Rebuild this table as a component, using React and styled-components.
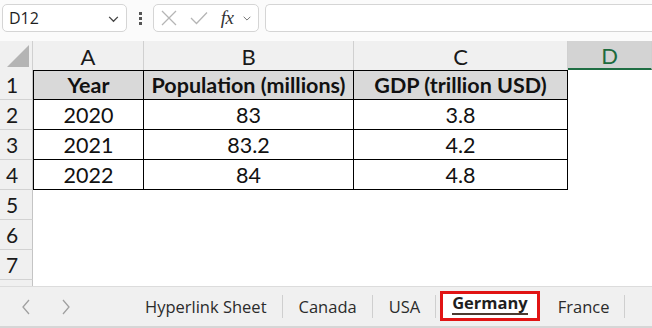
import React from 'react';
import styled, { createGlobalStyle } from 'styled-components';

const GlobalStyle = createGlobalStyle`
    html, body {
        margin: 0;
        padding: 0;
        background: #ffffff;
    }
    * {
        box-sizing: border-box;
    }
`;

const Window = styled.div`
    width: 652px;
    height: 328px;
    display: flex;
    flex-direction: column;
    overflow: hidden;
    background: #ffffff;
    font-family: Lato, "Liberation Sans", sans-serif;
    color: #1a1a1a;
`;

// ---- formula bar ----

const FormulaBar = styled.div`
    height: 41px;
    flex: none;
    display: flex;
    align-items: flex-start;
    padding: 4px 0 0 2px;
    background: #fbfbfb;
`;

const Box = styled.div`
    height: 28px;
    border: 1px solid #d5d5d5;
    border-radius: 5px;
    background: #ffffff;
    display: flex;
    align-items: center;
    width: ${props => props.width || 'auto'};
    ${props => props.grow && `flex: 1; border-right: none; border-radius: 5px 0 0 5px; margin-left: 6px;`}
`;

const NameText = styled.span`
    flex: 1;
    padding-left: 6px;
    font-family: "Open Sans", "Noto Sans", sans-serif;
    font-size: 16px;
    color: #1f1f1f;
`;

const Dots = styled.div`
    width: 26px;
    display: flex;
    flex-direction: column;
    align-items: center;
    gap: 2px;
    padding-top: 8px;
    span {
        width: 3px;
        height: 3px;
        background: #555;
    }
`;

const IconSlot = styled.div`
    display: flex;
    align-items: center;
    justify-content: center;
    width: ${props => props.w}px;
    height: 100%;
`;

const Fx = styled.span`
    font-family: "Liberation Serif", serif;
    font-style: italic;
    font-size: 19px;
    color: #333;
    letter-spacing: -0.5px;
`;

// ---- grid ----

const Sheet = styled.div`
    flex: 1;
    display: grid;
    grid-template-columns: 33px 111px 210px 214px 1fr;
    grid-template-rows: 29px;
    grid-auto-rows: 30px;
    overflow: hidden;
    align-content: start;
`;

const Corner = styled.div`
    background: #f0f0f0;
    border-right: 1px solid #d0d0d0;
    position: relative;
    &::after {
        content: '';
        position: absolute;
        right: 3px;
        bottom: 3px;
        width: 0;
        height: 0;
        border-left: 22px solid transparent;
        border-bottom: 22px solid #b4b4b4;
    }
`;

const ColHead = styled.div`
    display: flex;
    align-items: center;
    justify-content: center;
    font-size: 22px;
    background: ${props => props.active ? '#d3d3d3' : '#f0f0f0'};
    color: ${props => props.active ? '#1d6b3d' : '#1a1a1a'};
    border-right: 1px solid #d0d0d0;
    border-bottom: ${props => props.active ? '2px solid #1f6e43' : 'none'};
    padding-top: 2px;
`;

const RowHead = styled.div`
    display: flex;
    align-items: center;
    padding-left: 6px;
    font-size: 21px;
    background: #f0f0f0;
    border-right: 1px solid #c4c4c4;
    border-bottom: 1px solid #d2d2d2;
    color: #1a1a1a;
`;

const Cell = styled.div`
    display: flex;
    align-items: center;
    justify-content: center;
    font-size: 21.5px;
    background: ${props => props.head ? '#d9d9d9' : '#ffffff'};
    font-weight: ${props => props.head ? 700 : 400};
    color: #111;
    ${props => props.table && `
        border-right: 1px solid #000;
        border-bottom: 1px solid #000;
    `}
    ${props => props.table && props.first && `border-left: 1px solid #000;`}
    ${props => props.table && props.head && `border-top: 1px solid #000;`}
`;

// ---- sheet tabs ----

const TabBar = styled.div`
    height: 42px;
    flex: none;
    display: flex;
    align-items: stretch;
    background: #f0f0f0;
    border-top: 1px solid #dcdcdc;
    border-bottom: 2px solid #d6d6d6;
    font-family: "Open Sans", "Noto Sans", sans-serif;
    font-size: 16.5px;
    color: #2b2b2b;
`;

const Nav = styled.div`
    width: 129px;
    display: flex;
    align-items: center;
    padding-left: 21px;
    gap: 30px;
`;

const Tab = styled.div`
    display: flex;
    align-items: center;
    padding: 0 16px;
    position: relative;
    &::after {
        content: '';
        position: absolute;
        right: 0;
        top: 8px;
        bottom: 8px;
        width: 1px;
        background: #cfcfcf;
    }
    ${props => props.active && `
        margin: 4px 2px 5px 4px;
        padding: 0 9px;
        background: #ffffff;
        border: 3px solid #e11414;
        font-weight: 700;
        color: #1f1f1f;
        &::after { display: none; }
    `}
`;

const TabLabel = styled.span`
    ${props => props.active && `
        border-bottom: 2px solid #4b3a30;
        line-height: 20px;
        margin-top: -4px;
    `}
`;

const Chevron = ({ size = 12, color = '#555' }) => (
    <svg width={size} height={size} viewBox="0 0 12 12" fill="none">
        <path d="M2 4.5 L6 8.5 L10 4.5" stroke={color} strokeWidth="1.2" />
    </svg>
);

const Arrow = ({ dir }) => (
    <svg width="10" height="16" viewBox="0 0 10 16" fill="none">
        <path d={dir === 'left' ? 'M8 1 L2 8 L8 15' : 'M2 1 L8 8 L2 15'} stroke="#a0a0a0" strokeWidth="1.3" />
    </svg>
);

const columns = ['A', 'B', 'C', 'D'];
const data = [
    ['Year', 'Population (millions)', 'GDP (trillion USD)'],
    ['2020', '83', '3.8'],
    ['2021', '83.2', '4.2'],
    ['2022', '84', '4.8'],
];
const tabs = ['Hyperlink Sheet', 'Canada', 'USA', 'Germany', 'France'];

const App = () => {
    const rows = [];
    for (let r = 0; r < 8; r++) {
        const values = data[r];
        // row 8 is only a sliver above the tab bar, its number is hidden
        rows.push(<RowHead key={`h${r}`}>{r < 7 ? r + 1 : ''}</RowHead>);
        for (let c = 0; c < 4; c++) {
            const inTable = values && c < 3;
            rows.push(
                <Cell key={`${r}-${c}`} table={inTable} head={inTable && r === 0} first={c === 0}>
                    {inTable ? values[c] : ''}
                </Cell>
            );
        }
    }

    return (
        <Window>
            <GlobalStyle />
            <FormulaBar>
                <Box width="125px">
                    <NameText>D12</NameText>
                    <IconSlot w={26}><Chevron size={13} color="#444" /></IconSlot>
                </Box>
                <Dots><span /><span /><span /></Dots>
                <Box width="106px">
                    <IconSlot w={30}>
                        <svg width="16" height="16" viewBox="0 0 16 16">
                            <path d="M1 1 L15 15 M15 1 L1 15" stroke="#b5b5b5" strokeWidth="1.3" />
                        </svg>
                    </IconSlot>
                    <IconSlot w={30}>
                        <svg width="18" height="14" viewBox="0 0 18 14" fill="none">
                            <path d="M1 7 L6.5 12.5 L17 1.5" stroke="#b5b5b5" strokeWidth="1.3" />
                        </svg>
                    </IconSlot>
                    <IconSlot w={26}><Fx>fx</Fx></IconSlot>
                    <IconSlot w={14}><Chevron size={10} color="#777" /></IconSlot>
                </Box>
                <Box grow />
            </FormulaBar>

            <Sheet>
                <Corner />
                {columns.map(col => (
                    <ColHead key={col} active={col === 'D'}>{col}</ColHead>
                ))}
                {rows}
            </Sheet>

            <TabBar>
                <Nav>
                    <Arrow dir="left" />
                    <Arrow dir="right" />
                </Nav>
                {tabs.map(t => (
                    <Tab key={t} active={t === 'Germany'}>
                        <TabLabel active={t === 'Germany'}>{t}</TabLabel>
                    </Tab>
                ))}
            </TabBar>
        </Window>
    );
};

export default App;
